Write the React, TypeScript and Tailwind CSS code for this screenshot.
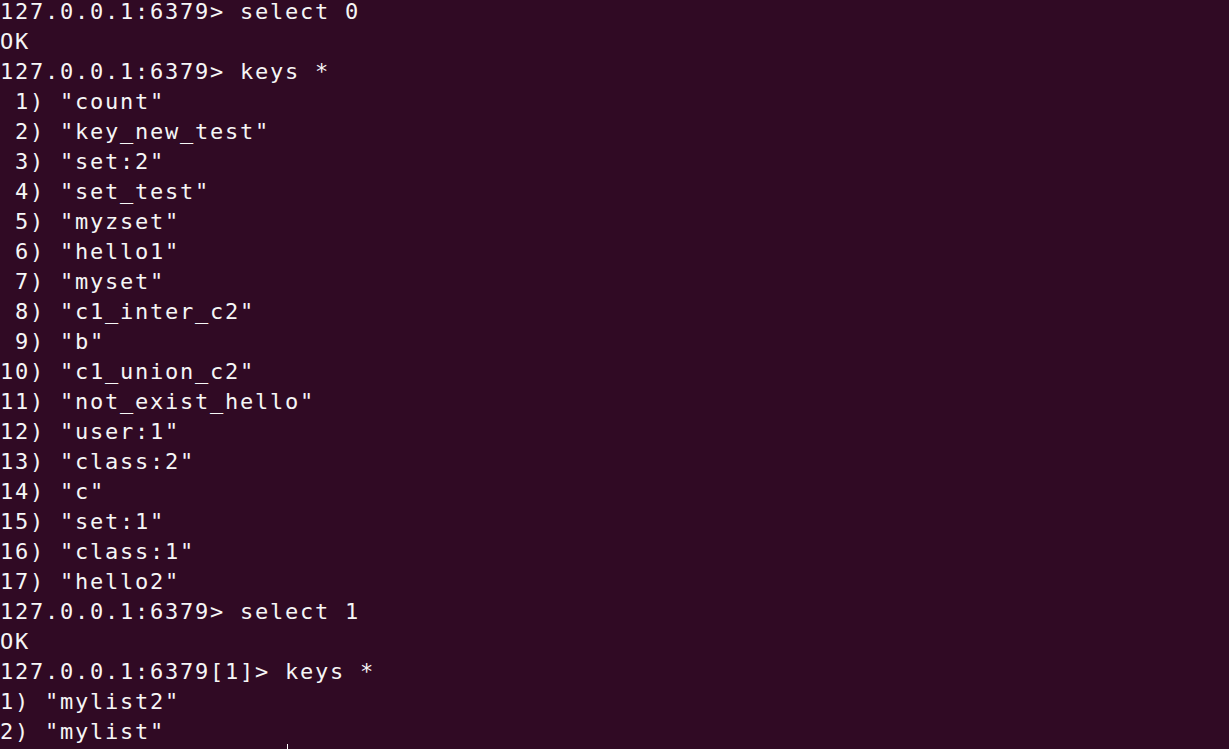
const lines = [
  "127.0.0.1:6379> select 0",
  "OK",
  "127.0.0.1:6379> keys *",
  ' 1) "count"',
  ' 2) "key_new_test"',
  ' 3) "set:2"',
  ' 4) "set_test"',
  ' 5) "myzset"',
  ' 6) "hello1"',
  ' 7) "myset"',
  ' 8) "c1_inter_c2"',
  ' 9) "b"',
  '10) "c1_union_c2"',
  '11) "not_exist_hello"',
  '12) "user:1"',
  '13) "class:2"',
  '14) "c"',
  '15) "set:1"',
  '16) "class:1"',
  '17) "hello2"',
  "127.0.0.1:6379> select 1",
  "OK",
  "127.0.0.1:6379[1]> keys *",
  '1) "mylist2"',
  '2) "mylist"',
];

export default function App() {
  return (
    <div className="relative h-[749px] w-[1229px] overflow-hidden bg-[#300a24] text-[#f6f6f6]">
      <div className="-mt-[3px] font-['DejaVu_Sans_Mono',monospace] text-[22px] leading-[30px] tracking-[1.76px]">
        {lines.map((line, i) => (
          <div key={i} className="h-[30px] whitespace-pre">
            {line}
          </div>
        ))}
      </div>
      {/* mouse cursor sliver */}
      <div className="absolute left-[287px] top-[744px] h-[5px] w-px bg-white" />
    </div>
  );
}
